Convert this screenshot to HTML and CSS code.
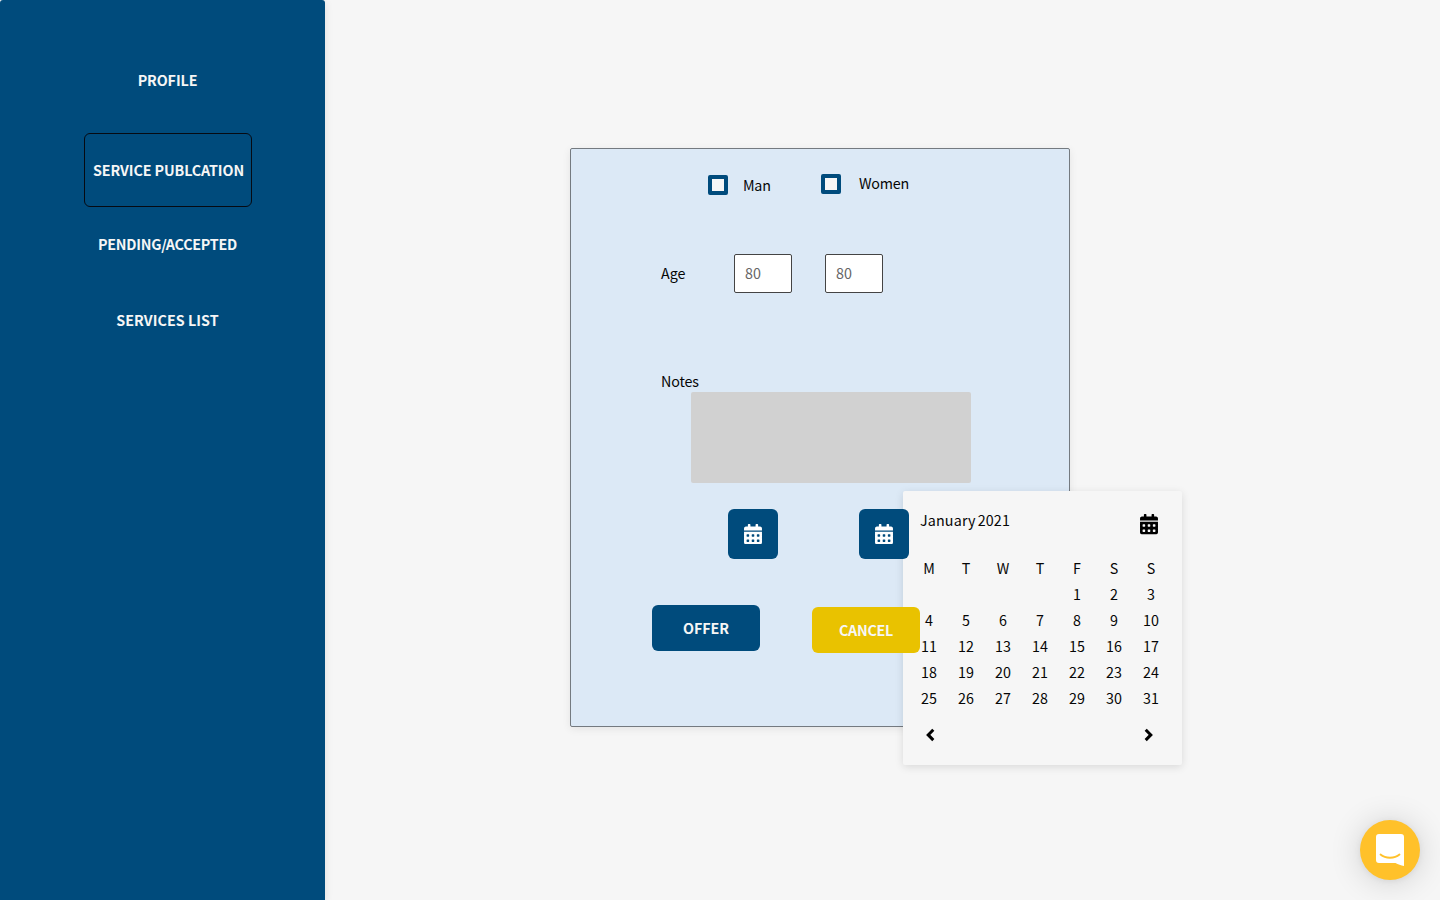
FILE: index.html
```html
<!DOCTYPE html>
<html lang="en">
<head>
<meta charset="utf-8">
<title>Service publication</title>
<link rel="stylesheet" href="styles.css">
</head>
<body>
<svg class="defs" width="0" height="0">
  <symbol id="calendar" viewBox="0 0 448 512"><path d="M0 464c0 26.500 21.500 48 48 48h352c26.500 0 48-21.500 48-48V192H0v272zm320-196c0-6.600 5.400-12 12-12h40c6.600 0 12 5.400 12 12v40c0 6.600-5.400 12-12 12h-40c-6.600 0-12-5.400-12-12v-40zm0 128c0-6.600 5.400-12 12-12h40c6.600 0 12 5.400 12 12v40c0 6.600-5.400 12-12 12h-40c-6.600 0-12-5.400-12-12v-40zM192 268c0-6.600 5.400-12 12-12h40c6.600 0 12 5.400 12 12v40c0 6.600-5.400 12-12 12h-40c-6.600 0-12-5.400-12-12v-40zm0 128c0-6.600 5.400-12 12-12h40c6.600 0 12 5.400 12 12v40c0 6.600-5.400 12-12 12h-40c-6.600 0-12-5.400-12-12v-40zM64 268c0-6.600 5.400-12 12-12h40c6.600 0 12 5.400 12 12v40c0 6.600-5.400 12-12 12H76c-6.600 0-12-5.400-12-12v-40zm0 128c0-6.600 5.400-12 12-12h40c6.600 0 12 5.400 12 12v40c0 6.600-5.400 12-12 12H76c-6.600 0-12-5.400-12-12v-40zM400 64h-48V16c0-8.800-7.200-16-16-16h-32c-8.800 0-16 7.200-16 16v48H160V16c0-8.800-7.200-16-16-16h-32c-8.800 0-16 7.200-16 16v48H48C21.500 64 0 85.500 0 112v48h448v-48c0-26.500-21.500-48-48-48z"/></symbol>
  <symbol id="chevron" viewBox="0 0 9 14"><path d="M7.300 1.700 2.200 6.900l5.100 5.200" fill="none" stroke="currentColor" stroke-width="3"/></symbol>
</svg>
<div class="page">
  <nav class="sidebar">
    <a class="nav-item">PROFILE</a>
    <a class="nav-item active">SERVICE PUBLCATION</a>
    <a class="nav-item pending">PENDING/ACCEPTED</a>
    <a class="nav-item services">SERVICES LIST</a>
  </nav>
  <main class="content">
    <form class="card">
      <div class="row gender">
        <label class="check man"><span class="box"></span><span>Man</span></label>
        <label class="check women"><span class="box"></span><span class="label">Women</span></label>
      </div>
      <div class="row age">
        <span class="age-label">Age</span>
        <span class="field">80</span>
        <span class="field">80</span>
      </div>
      <div class="notes">
        <span>Notes</span>
        <div class="textarea"></div>
      </div>
      <div class="row dates">
        <span class="date-btn"><svg class="cal-icon"><use href="#calendar"/></svg></span>
        <span class="date-btn"><svg class="cal-icon"><use href="#calendar"/></svg></span>
      </div>
      <div class="row actions">
        <span class="btn offer">OFFER</span>
        <span class="btn cancel">CANCEL</span>
      </div>
      <section class="calendar">
        <header class="cal-head"><span>January 2021</span><svg class="cal-icon"><use href="#calendar"/></svg></header>
        <div class="grid">
          <span>M</span><span>T</span><span>W</span><span>T</span><span>F</span><span>S</span><span>S</span>
          <span class="first">1</span><span>2</span><span>3</span>
          <span>4</span><span>5</span><span>6</span><span>7</span><span>8</span><span>9</span><span>10</span>
          <span>11</span><span>12</span><span>13</span><span>14</span><span>15</span><span>16</span><span>17</span>
          <span>18</span><span>19</span><span>20</span><span>21</span><span>22</span><span>23</span><span>24</span>
          <span>25</span><span>26</span><span>27</span><span>28</span><span>29</span><span>30</span><span>31</span>
        </div>
        <footer class="cal-foot"><svg class="chev"><use href="#chevron"/></svg><svg class="chev next"><use href="#chevron"/></svg></footer>
      </section>
    </form>
  </main>
  <div class="chat"><svg width="28" height="32" viewBox="0 0 28 32"><path d="M3 0h22a3 3 0 0 1 3 3v29c-3-.6-6-1.600-8.500-3H3a3 3 0 0 1-3-3V3a3 3 0 0 1 3-3z" fill="#fff"/><path d="M4.500 20.500c5 4.300 14 4.300 19 0" fill="none" stroke="#ffc12a" stroke-width="1.800" stroke-linecap="round"/></svg></div>
</div>
</body>
</html>
```
FILE: styles.css
```css
* { box-sizing: border-box; }
body { margin: 0; background: #f6f6f6; color: #060606; font: 14.3px/20px "Noto Sans CJK SC", "Noto Sans", sans-serif; }
.defs { position: absolute; }
.page { display: flex; height: 900px; overflow: hidden; }
.sidebar { width: 325px; height: 900px; padding: 70px 0 0 10px; display: flex; flex-direction: column; align-items: center; background: #004b7c; border-radius: 3px 3px 0 0; box-shadow: 0 2px 8px rgba(0,0,0,.1); color: #f6f6f6; font-weight: 700; }
.nav-item { white-space: nowrap; letter-spacing: -.1px; }
.active { width: 168px; height: 74px; margin: 43px 0 27px; padding-left: 2px; border: 1px solid #060a12; border-radius: 6px; display: flex; align-items: center; justify-content: center; }
.pending { margin-bottom: 56px; letter-spacing: -.24px; }
.services { letter-spacing: .06px; }
.content { flex: 1; padding: 148px 0 0 245px; }
.card { position: relative; width: 500px; height: 579px; border: 1px solid #747a80; border-radius: 2px; background: #dce9f6; box-shadow: 0 2px 8px rgba(0,0,0,.08); }
.row { display: flex; }
.gender { padding: 25px 0 0 137px; letter-spacing: -.25px; }
.check { display: flex; }
.man { width: 113px; gap: 15px; margin-top: 1px; }
.women { gap: 18px; }
.label { margin-top: -1px; }
.box { width: 20px; height: 20px; border: 4px solid #004b7c; border-radius: 2px; background: #f6f6f6; }
.age { margin-top: 59px; padding-left: 90px; align-items: center; }
.age-label { width: 73px; padding-bottom: 2px; }
.field { width: 58px; height: 39px; padding: 8px 10px; margin-right: 33px; border: 1px solid #444; border-radius: 2px; background: #fff; color: #666; }
.notes { margin: 78px 0 0 90px; letter-spacing: -.15px; }
.textarea { width: 280px; height: 91px; margin: 1px 0 0 30px; border-radius: 2px; background: #d1d1d1; }
.dates { margin: 26px 0 0 157px; gap: 81px; position: relative; z-index: 2; }
.date-btn { width: 50px; height: 50px; border-radius: 6px; background: #004b7c; color: #fff; display: flex; align-items: center; justify-content: center; }
.cal-icon { width: 18px; height: 20.500px; fill: currentColor; }
.actions { margin: 46px 0 0 81px; gap: 52px; position: relative; z-index: 2; }
.btn { width: 108px; height: 46px; border-radius: 6px; color: #f6f6f6; font-weight: 700; letter-spacing: -.1px; display: flex; align-items: center; justify-content: center; }
.offer { background: #004b7c; }
.cancel { background: #e9c200; margin-top: 2px; letter-spacing: -.25px; }
.calendar { position: absolute; left: 332px; top: 342px; width: 279px; height: 274px; border-radius: 2px; background: #f6f6f6; box-shadow: 0 2px 8px rgba(0,0,0,.12); }
.cal-head { display: flex; justify-content: space-between; padding: 19px 24px 0 17px; letter-spacing: .15px; word-spacing: -1.300px; }
.cal-head .cal-icon { margin-top: 4px; color: #000; }
.grid { display: grid; grid-template-columns: repeat(7, 37px); grid-auto-rows: 26px; line-height: 26px; text-align: center; margin: 20px 0 0 7.500px; }
.first { grid-column: 5; }
.cal-foot { display: flex; justify-content: space-between; padding: 17px 29px 0 22.500px; color: #000; }
.chev { width: 9px; height: 14px; }
.next { transform: scaleX(-1); }
.chat { position: absolute; left: 1360px; top: 820px; width: 60px; height: 60px; border-radius: 50%; background: #ffc12a; box-shadow: 0 1px 6px rgba(0,0,0,.06), 0 2px 32px rgba(0,0,0,.16); display: flex; align-items: center; justify-content: center; }
```
